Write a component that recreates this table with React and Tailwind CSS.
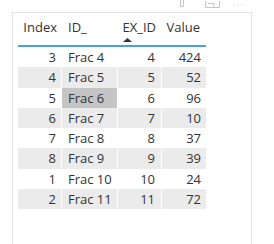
import React from "react";

const rows = [
  [3, "Frac 4", 4, 424],
  [4, "Frac 5", 5, 52],
  [5, "Frac 6", 6, 96],
  [6, "Frac 7", 7, 10],
  [7, "Frac 8", 8, 37],
  [8, "Frac 9", 9, 39],
  [1, "Frac 10", 10, 24],
  [2, "Frac 11", 11, 72],
];

export default function App() {
  return (
    <div
      className="w-[274px] h-[244px] overflow-hidden bg-white text-[#333333]"
      style={{ fontFamily: '"Open Sans", "Noto Sans", sans-serif' }}
    >
      {/* visual header icons (clipped at top) */}
      <div className="h-[12px] flex items-start pl-[180px]">
        <svg width="4" height="8" viewBox="0 0 4 8" className="mt-[-1px]">
          <path d="M0.5 0 V7.5 H3.5 V0" fill="none" stroke="#c4c4c4" strokeWidth="1" />
        </svg>
        <svg width="15" height="9" viewBox="0 0 15 9" className="ml-[21px]">
          <path d="M0.5 1 V7.5 H14.5 V1" fill="none" stroke="#c4c4c4" strokeWidth="1" />
          <path d="M3 3.5 H9 V7" fill="none" stroke="#c4c4c4" strokeWidth="1" />
        </svg>
        <svg width="11" height="6" viewBox="0 0 11 6" className="ml-[13px] mt-[2px]">
          <circle cx="1.5" cy="3" r="0.8" fill="#dddddd" />
          <circle cx="5.5" cy="3" r="0.8" fill="#dddddd" />
          <circle cx="9.5" cy="3" r="0.8" fill="#dddddd" />
        </svg>
      </div>
      <div className="ml-[12px] w-[240px] h-[240px] border border-[#e4e4e4] pl-[5px]">
        <div className="w-[188px] text-[13px]">
          <div className="flex h-[34px] border-b-2 border-[#4c9fdb]">
            <div className="w-[44px] pt-[5px] pr-[5px] text-right leading-[18px]">Index</div>
            <div className="w-[56px] pt-[5px] pl-[6px] leading-[18px]">ID_</div>
            <div className="w-[44px] pt-[5px] pr-[6px] flex flex-col items-end leading-[18px]">
              <span>EX_ID</span>
              <svg width="9" height="4" viewBox="0 0 9 4" className="self-start ml-[5px] mt-[2px]">
                <path d="M0 4 L4.5 0 L9 4 Z" fill="#333333" />
              </svg>
            </div>
            <div className="w-[44px] pt-[5px] pr-[6px] text-right leading-[18px]">Value</div>
          </div>
          {rows.map((r, i) => (
            <div
              key={i}
              className={`flex h-[20.3px] leading-[20px] ${i % 2 === 1 ? "bg-[#ebebeb]" : "bg-white"}`}
            >
              <div className="w-[44px] pr-[5px] text-right border-r border-white">{r[0]}</div>
              <div
                className={`w-[56px] pl-[6px] border-r border-white ${i === 2 ? "bg-[#c5c5c5]" : ""}`}
              >
                {r[1]}
              </div>
              <div className="w-[44px] pr-[6px] text-right border-r border-white">{r[2]}</div>
              <div className="w-[44px] pr-[5px] text-right">{r[3]}</div>
            </div>
          ))}
        </div>
      </div>
    </div>
  );
}
